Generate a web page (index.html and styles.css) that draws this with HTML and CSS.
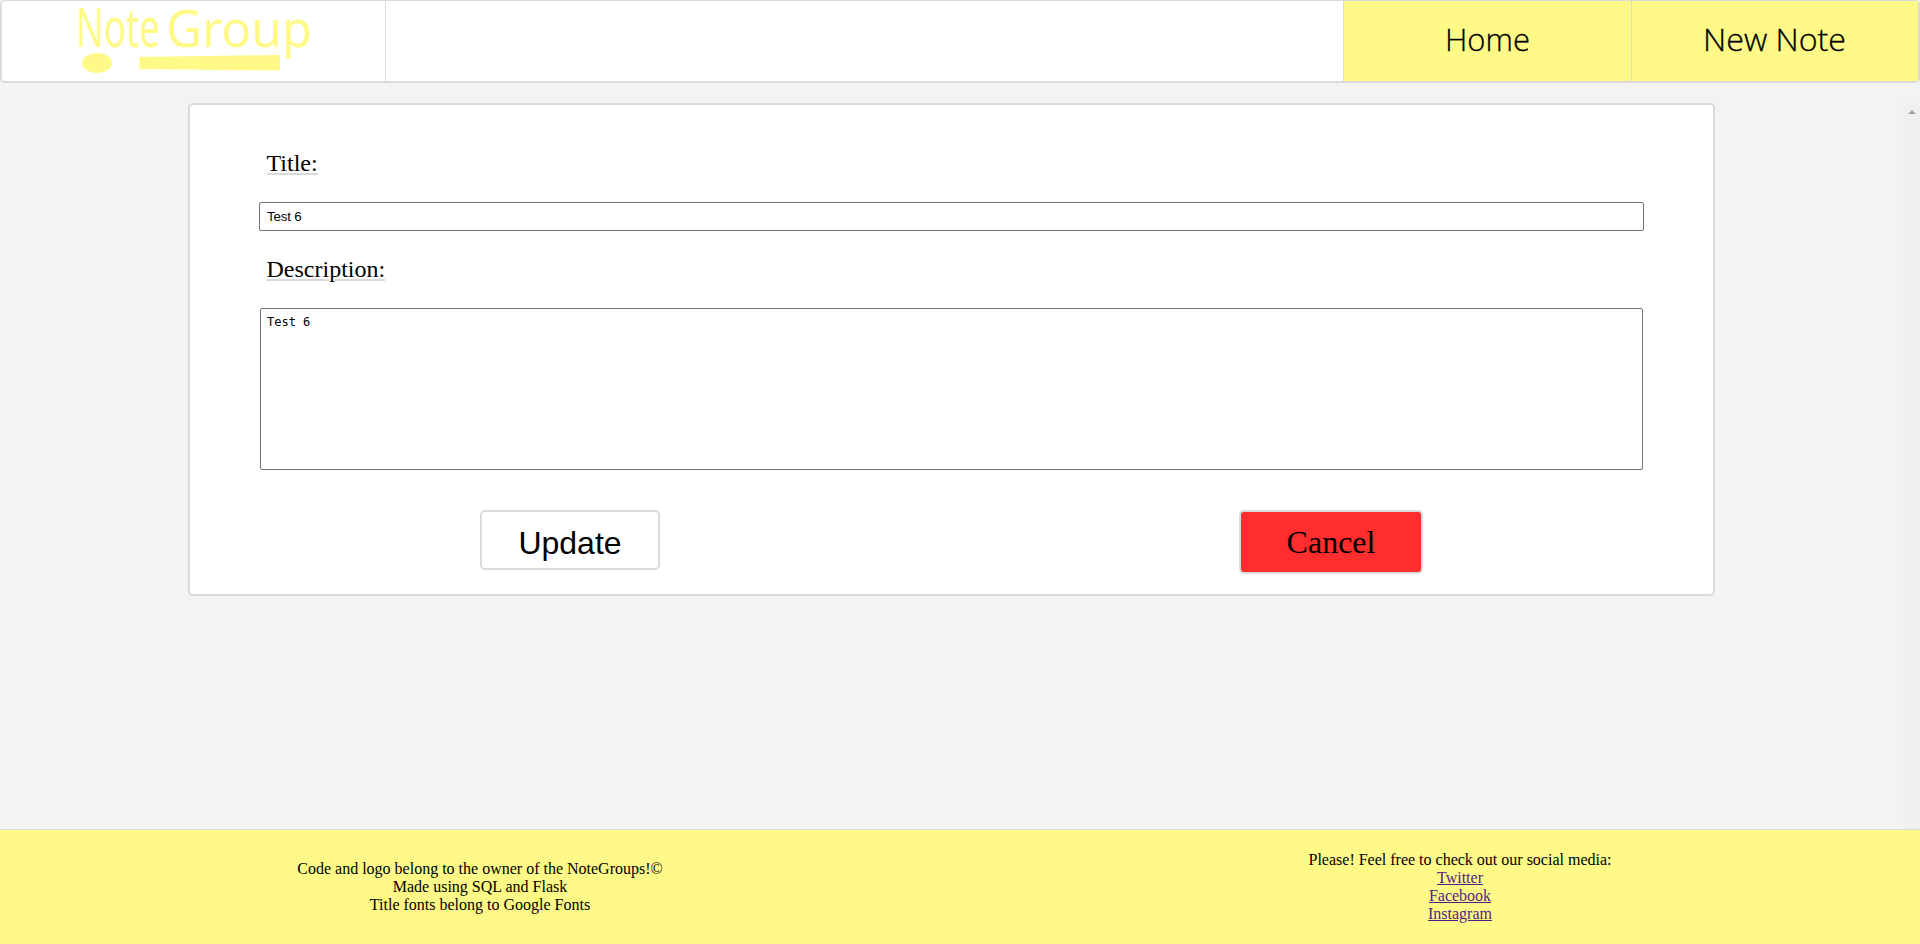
FILE: index.html
```html
<!DOCTYPE html>
<html lang="en">
<head>
<meta charset="utf-8">
<title>NoteGroup</title>
<link rel="stylesheet" href="styles.css">
</head>
<body>
<header class="header">
  <div class="logo">
    <svg class="logo-art" width="240" height="76" viewBox="0 0 240 76" fill="#fffa87">
      <text class="logo-text" transform="translate(-2 41) scale(0.68 1)" font-size="54">Note</text>
      <text class="logo-text" transform="translate(88 41) scale(0.968 1)" font-size="51">Group</text>
      <ellipse cx="19" cy="57" rx="15" ry="10"/>
      <path d="M61.3 51 L202 49 V64.500 L61.300 63 Z"/>
    </svg>
  </div>
  <nav class="nav">
    <a class="nav-link"><svg width="90" height="50"><text class="nav-text" x="3" y="35" textLength="85" lengthAdjust="spacingAndGlyphs">Home</text></svg></a>
    <a class="nav-link"><svg width="146" height="50"><text class="nav-text" x="1" y="35" textLength="143" lengthAdjust="spacingAndGlyphs">New Note</text></svg></a>
  </nav>
</header>
<main class="main">
  <section class="content">
    <form class="card">
      <label class="label" for="title">Title:</label>
      <input class="title-input" id="title" type="text" value="Test 6">
      <label class="label label-description" for="description">Description:</label>
      <textarea class="description-input" id="description">Test 6</textarea>
      <div class="actions">
        <button class="button update" type="button">Update</button>
        <a class="button cancel">Cancel</a>
      </div>
    </form>
  </section>
  <div class="scrollbar"><span class="scroll-up"></span></div>
</main>
<footer class="footer">
  <p class="footer-column">Code and logo belong to the owner of the NoteGroups!©<br>Made using SQL and Flask<br>Title fonts belong to Google Fonts</p>
  <p class="footer-column footer-social">Please! Feel free to check out our social media:<br><a class="social" href="#">Twitter</a><br><a class="social" href="#">Facebook</a><br><a class="social" href="#">Instagram</a></p>
</footer>
</body>
</html>
```
FILE: styles.css
```css
* { box-sizing: border-box; }
body {
  margin: 0;
  height: 944px;
  display: flex;
  flex-direction: column;
  overflow: hidden;
  background: #f3f3f3;
  color: #000;
  font-family: "Liberation Serif", "Times New Roman", serif;
  font-size: 16px;
}
.header {
  height: 83px;
  display: flex;
  justify-content: space-between;
  background: #fff;
  border: 2px solid #dadada;
  border-top-width: 1px;
  border-radius: 5px;
}
.logo {
  width: 384px;
  padding-left: 76px;
  border-right: 1px solid #dadada;
}
.logo-art { display: block; margin-top: 5px; overflow: visible; }
.logo-text { font-family: "Noto Sans", "Open Sans", sans-serif; }
.nav { display: flex; width: 575px; }
.nav-link {
  flex: 1;
  display: flex;
  align-items: center;
  justify-content: center;
  background: #fffa87;
  border-left: 1px solid #dadada;
}
.nav-text {
  font-family: "Open Sans", sans-serif;
  font-weight: 300;
  font-size: 31px;
  stroke: #000;
  stroke-width: 0.3px;
}
.main { flex: 1; display: flex; padding-top: 20px; }
.content { flex: 1; padding-left: 188px; }
.card {
  width: 1527px;
  height: 493px;
  display: flex;
  flex-direction: column;
  padding: 44px 69px 0;
  background: #fff;
  border: 2px solid #dadada;
  border-radius: 5px;
}
.label {
  align-self: flex-start;
  height: 28px;
  margin-left: 7.5px;
  font-size: 24px;
  line-height: 28px;
  text-decoration: underline #dadada 2px;
  text-underline-offset: 2px;
}
.title-input {
  width: 1385px;
  height: 29px;
  margin-top: 25px;
  padding: 1px 7px;
  border: 1px solid #767676;
  border-radius: 2px;
  font-family: "Liberation Sans", Arial, sans-serif;
  font-size: 13.333px;
  letter-spacing: -0.2px;
}
.label-description { margin-top: 24px; }
.description-input {
  width: 1383px;
  height: 162px;
  margin: 25px 0 0 1px;
  padding: 6px;
  border: 1px solid #767676;
  border-radius: 2px;
  font-family: "DejaVu Sans Mono", monospace;
  font-size: 12px;
  resize: none;
}
.actions {
  display: flex;
  justify-content: space-between;
  align-items: flex-start;
  padding: 40px 221px 0;
}
.button {
  border: 2px solid #dadada;
  border-radius: 5px;
  color: #000;
  font-size: 32px;
  text-align: center;
}
.update {
  width: 180px;
  height: 60px;
  padding: 6px 0 0;
  background: #fff;
  font-family: "Liberation Sans", Arial, sans-serif;
}
.cancel {
  width: 184px;
  height: 64px;
  background: #ff2d2d;
  line-height: 61px;
}
.scrollbar {
  width: 17px;
  padding-top: 7px;
  background: #f0f0f0;
}
.scroll-up {
  display: block;
  margin-left: 5px;
  width: 7px;
  border: 4px solid transparent;
  border-top: 0;
  border-bottom-color: #a3a3a3;
}
.footer {
  height: 115px;
  display: flex;
  align-items: center;
  background: #fffa87;
  border-top: 1px solid #dadada;
}
.footer-column {
  width: 960px;
  margin: 0;
  line-height: 18px;
  text-align: center;
}
.footer-social { width: 920px; margin-left: 40px; }
.social { color: #551a8b; }
```
